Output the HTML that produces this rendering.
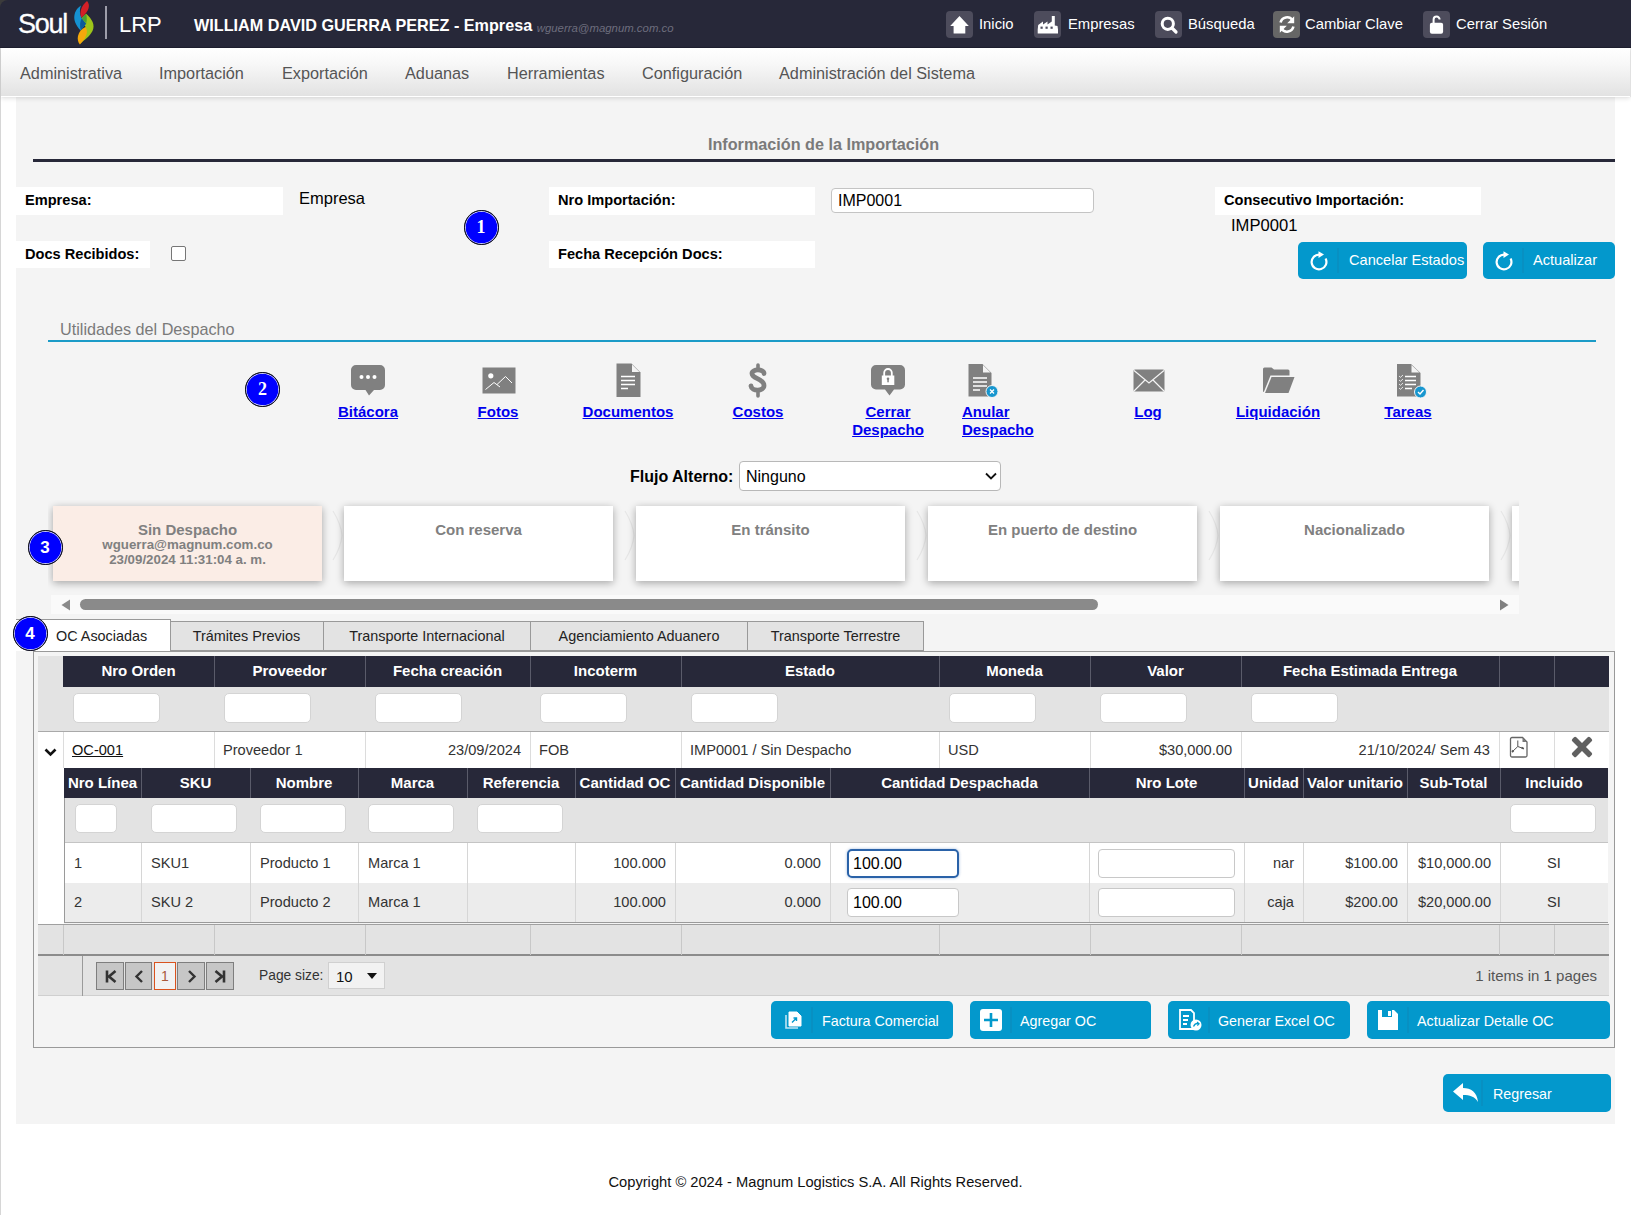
<!DOCTYPE html>
<html><head><meta charset="utf-8">
<style>
*{box-sizing:border-box;margin:0;padding:0}
html,body{width:1631px;height:1215px;overflow:hidden;background:#fff;font-family:"Liberation Sans",sans-serif;color:#000}
.abs{position:absolute}
#hdr{position:absolute;left:0;top:0;width:1631px;height:48px;background:#272839;border-top-left-radius:8px;border-bottom:1px solid #1f2030}
#hdr .ut{position:absolute;top:0;height:48px;line-height:48px;color:#fff;font-size:14.8px;white-space:nowrap}
.hib{position:absolute;top:11px;width:27px;height:27px;border-radius:4px;background:#4d4c5c}
#nav{position:absolute;left:1px;top:48px;width:1629px;height:49px;background:linear-gradient(#fff 0%,#f7f7f7 35%,#e2e2e2 100%);border-bottom:1px solid #fff;box-shadow:0 2px 4px rgba(0,0,0,0.10),1px 0 1px rgba(0,0,0,0.08);z-index:2}
#nav span{position:absolute;top:0.5px;line-height:48px;font-size:16.25px;color:#555}
#lb{position:absolute;left:0;top:48px;width:1px;height:1167px;background:#d6d6d6}
#content{position:absolute;left:16px;top:97px;width:1599px;height:1027px;background:#f4f4f4}
.lbl{position:absolute;background:#fff;font-weight:bold;font-size:14.6px;line-height:26px;padding-left:9px}
.badge{position:absolute;width:35px;height:35px;border-radius:50%;background:#0000ff;border:1.4px solid #111;box-shadow:inset 0 0 0 0.7px #fff,0 0 0.6px #777;color:#fff;font-family:"Liberation Serif",serif;font-weight:bold;font-size:18px;text-align:center;line-height:32px;z-index:5}
.btn{position:absolute;background:#0398cc;border-radius:5px;color:#fff;font-size:15px;white-space:nowrap}
.lnk{position:absolute;top:403px;font-weight:bold;font-size:15px;line-height:18px;color:#0000ee;text-decoration:underline;white-space:nowrap}
.card{position:absolute;top:6px;width:269px;height:75px;background:#fff;box-shadow:0 2px 8px rgba(0,0,0,0.33);text-align:center;color:#808080}
.tab{position:absolute;top:621px;height:30px;background:#e3e3e3;border:1px solid #999;border-left:none;font-size:14.4px;line-height:29px;text-align:center;color:#222}
.gt{position:absolute;font-size:15px;white-space:nowrap;overflow:hidden}
</style></head><body>
<div class="abs" style="left:0;top:0;width:10px;height:10px;background:#3b3b3b"></div>
<div id="hdr">
  <div class="ut" style="left:18px;top:-0.5px;font-size:27px;letter-spacing:-1.3px;-webkit-text-stroke:0.3px #fff">Soul</div>
  <div class="ut" style="left:119px;top:1px;font-size:22px">LRP</div>
  <div class="ut" style="left:194px;top:1px;font-weight:bold;font-size:16.2px">WILLIAM DAVID GUERRA PEREZ - Empresa <span style="font-weight:normal;font-style:italic;font-size:11.4px;color:#6d6d7d;position:relative;top:1px">wguerra@magnum.com.co</span></div>
  <div class="hib" style="left:946px"></div><div class="ut" style="left:979px">Inicio</div>
  <div class="hib" style="left:1034px"></div><div class="ut" style="left:1068px">Empresas</div>
  <div class="hib" style="left:1155px"></div><div class="ut" style="left:1188px">Búsqueda</div>
  <div class="hib" style="left:1273px;background:#666"></div><div class="ut" style="left:1305px">Cambiar Clave</div>
  <div class="hib" style="left:1423px"></div><div class="ut" style="left:1456px">Cerrar Sesión</div>
</div>
<div id="nav">
  <span style="left:19px">Administrativa</span>
  <span style="left:158px">Importación</span>
  <span style="left:281px">Exportación</span>
  <span style="left:404px">Aduanas</span>
  <span style="left:506px">Herramientas</span>
  <span style="left:641px">Configuración</span>
  <span style="left:778px">Administración del Sistema</span>
</div>
<div id="lb"></div>
<div id="content"></div>
<!-- title -->
<div class="abs" style="left:16px;top:135px;width:1615px;text-align:center;font-weight:bold;font-size:16.2px;color:#7a7a7a">Información de la Importación</div>
<div class="abs" style="left:33px;top:159px;width:1582px;height:3px;background:#272839"></div>
<!-- row 1 -->
<div class="lbl" style="left:16px;top:187px;width:267px;height:28px">Empresa:</div>
<div class="abs" style="left:299px;top:188px;font-size:16.5px;line-height:20px">Empresa</div>
<div class="badge" style="left:463.5px;top:209.5px">1</div>
<div class="lbl" style="left:549px;top:187px;width:266px;height:28px">Nro Importación:</div>
<div class="abs" style="left:831px;top:188px;width:263px;height:25px;background:#fff;border:1px solid #c4c4c4;border-radius:4px;font-size:16px;line-height:23px;padding-left:6px">IMP0001</div>
<div class="lbl" style="left:1215px;top:187px;width:266px;height:28px">Consecutivo Importación:</div>
<div class="abs" style="left:1231px;top:216px;font-size:16.6px;line-height:20px">IMP0001</div>
<!-- row 2 -->
<div class="lbl" style="left:16px;top:241px;width:134px;height:27px">Docs Recibidos:</div>
<div class="abs" style="left:171px;top:246px;width:15px;height:15px;border:1px solid #767676;border-radius:2px;background:#fff"></div>
<div class="lbl" style="left:549px;top:241px;width:266px;height:27px">Fecha Recepción Docs:</div>
<!-- buttons -->

<!-- utilidades -->
<div class="abs" style="left:60px;top:319px;font-size:16.2px;line-height:20px;color:#7a7a7a">Utilidades del Despacho</div>
<div class="abs" style="left:48px;top:340px;width:1548px;height:2px;background:#1b9bc7"></div>
<div class="badge" style="left:245px;top:372px">2</div>
<div id="icons"></div>
<div class="lnk" style="left:303px;width:130px;text-align:center">Bitácora</div>
<div class="lnk" style="left:433px;width:130px;text-align:center">Fotos</div>
<div class="lnk" style="left:563px;width:130px;text-align:center">Documentos</div>
<div class="lnk" style="left:693px;width:130px;text-align:center">Costos</div>
<div class="lnk" style="left:823px;width:130px;text-align:center">Cerrar<br>Despacho</div>
<div class="lnk" style="left:962px;width:130px;text-align:left">Anular<br>Despacho</div>
<div class="lnk" style="left:1083px;width:130px;text-align:center">Log</div>
<div class="lnk" style="left:1213px;width:130px;text-align:center">Liquidación</div>
<div class="lnk" style="left:1343px;width:130px;text-align:center">Tareas</div>
<!-- flujo -->
<div class="abs" style="left:630px;top:467px;font-weight:bold;font-size:16px;line-height:20px">Flujo Alterno:</div>
<div class="abs" style="left:739px;top:461px;width:262px;height:30px;background:#fff;border:1px solid #b8b8b8;border-radius:4px;font-size:16px;line-height:30px;padding-left:6px">Ninguno
  <svg class="abs" style="left:245px;top:10px" width="12" height="8" viewBox="0 0 12 8"><path d="M1 1.5 L6 6.5 L11 1.5" fill="none" stroke="#111" stroke-width="1.8"/></svg>
</div>
<!-- status cards -->
<div class="abs" style="left:48px;top:500px;width:1471px;height:114px;overflow:hidden">
  <svg class="abs" style="left:284px;top:10px" width="12" height="52" viewBox="0 0 12 52"><path d="M1 1 Q9 14 10 25.5 Q9 37 1 50" fill="none" stroke="#e6e6e6" stroke-width="1.2"/></svg><svg class="abs" style="left:576px;top:10px" width="12" height="52" viewBox="0 0 12 52"><path d="M1 1 Q9 14 10 25.5 Q9 37 1 50" fill="none" stroke="#e6e6e6" stroke-width="1.2"/></svg><svg class="abs" style="left:868px;top:10px" width="12" height="52" viewBox="0 0 12 52"><path d="M1 1 Q9 14 10 25.5 Q9 37 1 50" fill="none" stroke="#e6e6e6" stroke-width="1.2"/></svg><svg class="abs" style="left:1160px;top:10px" width="12" height="52" viewBox="0 0 12 52"><path d="M1 1 Q9 14 10 25.5 Q9 37 1 50" fill="none" stroke="#e6e6e6" stroke-width="1.2"/></svg><svg class="abs" style="left:1452px;top:10px" width="12" height="52" viewBox="0 0 12 52"><path d="M1 1 Q9 14 10 25.5 Q9 37 1 50" fill="none" stroke="#e6e6e6" stroke-width="1.2"/></svg><div class="card" style="left:5px;background:#fbede6"><b style="font-size:15px;line-height:18px;display:block;margin-top:15px">Sin Despacho</b><b style="font-size:13.3px;line-height:14.5px;display:block;margin-top:-1px">wguerra@magnum.com.co</b><b style="font-size:13.3px;line-height:14.5px;display:block">23/09/2024 11:31:04 a. m.</b></div>
  <div class="card" style="left:296px"><b style="font-size:15px;line-height:18px;display:block;margin-top:15px">Con reserva</b></div>
  <div class="card" style="left:588px"><b style="font-size:15px;line-height:18px;display:block;margin-top:15px">En tránsito</b></div>
  <div class="card" style="left:880px"><b style="font-size:15px;line-height:18px;display:block;margin-top:15px">En puerto de destino</b></div>
  <div class="card" style="left:1172px"><b style="font-size:15px;line-height:18px;display:block;margin-top:15px">Nacionalizado</b></div>
  <div class="card" style="left:1464px"></div>
  <div class="abs" style="left:3px;top:95px;width:1468px;height:19px;background:#fafafa"></div>
  <svg class="abs" style="left:12px;top:99px" width="11" height="12" viewBox="0 0 11 12"><path d="M10 0.5 L1.5 6 L10 11.5 Z" fill="#8a8a8a"/></svg>
  <div class="abs" style="left:32px;top:99px;width:1018px;height:11px;border-radius:6px;background:#8a8a8a"></div>
  <svg class="abs" style="left:1451px;top:99px" width="11" height="12" viewBox="0 0 11 12"><path d="M1 0.5 L9.5 6 L1 11.5 Z" fill="#808080"/></svg>
</div>
<div class="badge" style="left:27.5px;top:529.5px;font-family:'Liberation Sans',sans-serif;font-size:17px;line-height:33px">3</div>
<!-- tabs -->
<div class="tab" style="left:170px;width:154px">Trámites Previos</div>
<div class="tab" style="left:324px;width:207px">Transporte Internacional</div>
<div class="tab" style="left:531px;width:217px">Agenciamiento Aduanero</div>
<div class="tab" style="left:748px;width:176px">Transporte Terrestre</div>
<div class="abs" style="left:33px;top:651px;width:1582px;height:397px;border:1px solid #999"></div>
<div class="abs" style="left:16px;top:619px;width:155px;height:32px;background:#fff;border-top:1px solid #999;border-right:1px solid #999;font-size:14.4px;line-height:33px;padding-left:40px;color:#222">OC Asociadas</div>
<div class="badge" style="left:12.5px;top:615.5px;font-family:'Liberation Sans',sans-serif;font-size:17px;line-height:33px">4</div>

<!--GRID-->
<div class="abs" style="left:38px;top:656px;width:1571px;height:31px;background:#272839"></div>
<div class="abs" style="left:38px;top:656px;width:25px;height:31px;background:#e3e3e3"></div>
<div class="abs" style="left:214px;top:656px;width:1px;height:31px;background:#5a5b6a"></div>
<div class="abs" style="left:365px;top:656px;width:1px;height:31px;background:#5a5b6a"></div>
<div class="abs" style="left:530px;top:656px;width:1px;height:31px;background:#5a5b6a"></div>
<div class="abs" style="left:681px;top:656px;width:1px;height:31px;background:#5a5b6a"></div>
<div class="abs" style="left:939px;top:656px;width:1px;height:31px;background:#5a5b6a"></div>
<div class="abs" style="left:1090px;top:656px;width:1px;height:31px;background:#5a5b6a"></div>
<div class="abs" style="left:1241px;top:656px;width:1px;height:31px;background:#5a5b6a"></div>
<div class="abs" style="left:1499px;top:656px;width:1px;height:31px;background:#5a5b6a"></div>
<div class="abs" style="left:1554px;top:656px;width:1px;height:31px;background:#5a5b6a"></div>
<div class="gt" style="left:63px;top:655px;width:151px;height:31px;line-height:31px;color:#fff;font-weight:bold;text-align:center">Nro Orden</div>
<div class="gt" style="left:214px;top:655px;width:151px;height:31px;line-height:31px;color:#fff;font-weight:bold;text-align:center">Proveedor</div>
<div class="gt" style="left:365px;top:655px;width:165px;height:31px;line-height:31px;color:#fff;font-weight:bold;text-align:center">Fecha creación</div>
<div class="gt" style="left:530px;top:655px;width:151px;height:31px;line-height:31px;color:#fff;font-weight:bold;text-align:center">Incoterm</div>
<div class="gt" style="left:681px;top:655px;width:258px;height:31px;line-height:31px;color:#fff;font-weight:bold;text-align:center">Estado</div>
<div class="gt" style="left:939px;top:655px;width:151px;height:31px;line-height:31px;color:#fff;font-weight:bold;text-align:center">Moneda</div>
<div class="gt" style="left:1090px;top:655px;width:151px;height:31px;line-height:31px;color:#fff;font-weight:bold;text-align:center">Valor</div>
<div class="gt" style="left:1241px;top:655px;width:258px;height:31px;line-height:31px;color:#fff;font-weight:bold;text-align:center">Fecha Estimada Entrega</div>
<div class="gt" style="left:1499px;top:655px;width:55px;height:31px;line-height:31px;color:#fff;font-weight:bold;text-align:center"></div>
<div class="gt" style="left:1554px;top:655px;width:55px;height:31px;line-height:31px;color:#fff;font-weight:bold;text-align:center"></div>
<div class="abs" style="left:38px;top:687px;width:1571px;height:44px;background:#e3e3e3"></div>
<div class="abs" style="left:73px;top:693px;width:87px;height:30px;background:#fff;border:1px solid #d4d4d4;border-radius:5px"></div>
<div class="abs" style="left:224px;top:693px;width:87px;height:30px;background:#fff;border:1px solid #d4d4d4;border-radius:5px"></div>
<div class="abs" style="left:375px;top:693px;width:87px;height:30px;background:#fff;border:1px solid #d4d4d4;border-radius:5px"></div>
<div class="abs" style="left:540px;top:693px;width:87px;height:30px;background:#fff;border:1px solid #d4d4d4;border-radius:5px"></div>
<div class="abs" style="left:691px;top:693px;width:87px;height:30px;background:#fff;border:1px solid #d4d4d4;border-radius:5px"></div>
<div class="abs" style="left:949px;top:693px;width:87px;height:30px;background:#fff;border:1px solid #d4d4d4;border-radius:5px"></div>
<div class="abs" style="left:1100px;top:693px;width:87px;height:30px;background:#fff;border:1px solid #d4d4d4;border-radius:5px"></div>
<div class="abs" style="left:1251px;top:693px;width:87px;height:30px;background:#fff;border:1px solid #d4d4d4;border-radius:5px"></div>
<div class="abs" style="left:38px;top:731px;width:1571px;height:37px;background:#fff"></div>
<div class="abs" style="left:63px;top:731px;width:1px;height:37px;background:#dcdcdc"></div>
<div class="abs" style="left:214px;top:731px;width:1px;height:37px;background:#dcdcdc"></div>
<div class="abs" style="left:365px;top:731px;width:1px;height:37px;background:#dcdcdc"></div>
<div class="abs" style="left:530px;top:731px;width:1px;height:37px;background:#dcdcdc"></div>
<div class="abs" style="left:681px;top:731px;width:1px;height:37px;background:#dcdcdc"></div>
<div class="abs" style="left:939px;top:731px;width:1px;height:37px;background:#dcdcdc"></div>
<div class="abs" style="left:1090px;top:731px;width:1px;height:37px;background:#dcdcdc"></div>
<div class="abs" style="left:1241px;top:731px;width:1px;height:37px;background:#dcdcdc"></div>
<div class="abs" style="left:1499px;top:731px;width:1px;height:37px;background:#dcdcdc"></div>
<div class="abs" style="left:1554px;top:731px;width:1px;height:37px;background:#dcdcdc"></div>
<div class="abs" style="left:38px;top:731px;width:1571px;height:1px;background:#a9a9a9"></div>
<div class="gt" style="left:63px;top:732px;width:151px;height:36px;line-height:36px;text-align:left;padding-left:9px;color:#333;font-size:14.6px;text-decoration:underline;color:#111">OC-001</div>
<div class="gt" style="left:214px;top:732px;width:151px;height:36px;line-height:36px;text-align:left;padding-left:9px;color:#333;font-size:14.6px;">Proveedor 1</div>
<div class="gt" style="left:365px;top:732px;width:165px;height:36px;line-height:36px;text-align:right;padding-right:9px;color:#333;font-size:14.6px;">23/09/2024</div>
<div class="gt" style="left:530px;top:732px;width:151px;height:36px;line-height:36px;text-align:left;padding-left:9px;color:#333;font-size:14.6px;">FOB</div>
<div class="gt" style="left:681px;top:732px;width:258px;height:36px;line-height:36px;text-align:left;padding-left:9px;color:#333;font-size:14.6px;">IMP0001 / Sin Despacho</div>
<div class="gt" style="left:939px;top:732px;width:151px;height:36px;line-height:36px;text-align:left;padding-left:9px;color:#333;font-size:14.6px;">USD</div>
<div class="gt" style="left:1090px;top:732px;width:151px;height:36px;line-height:36px;text-align:right;padding-right:9px;color:#333;font-size:14.6px;">$30,000.00</div>
<div class="gt" style="left:1241px;top:732px;width:258px;height:36px;line-height:36px;text-align:right;padding-right:9px;color:#333;font-size:14.6px;">21/10/2024/ Sem 43</div>
<svg class="abs" style="left:44px;top:748px" width="13" height="9" viewBox="0 0 13 9"><path d="M1.5 1.5 L6.5 6.5 L11.5 1.5" fill="none" stroke="#111" stroke-width="2.6"/></svg>
<svg class="abs" style="left:1509px;top:736px" width="20" height="22" viewBox="0 0 20 22"><path d="M3 1.5 H13.5 L18 6 V19.5 A1.5 1.5 0 0 1 16.5 21 H3 A1.5 1.5 0 0 1 1.5 19.5 V3 A1.5 1.5 0 0 1 3 1.5 Z" fill="none" stroke="#666" stroke-width="1.3"/><path d="M13.5 2 V6 H17.5 Z" fill="#777"/><path d="M8.8 4.5 V10.5 L3 16 M8.8 10.5 L14.8 12.7" fill="none" stroke="#555" stroke-width="1"/><path d="M3 16 L4.5 14.5 M14.8 12.7 L12.5 11.5" stroke="#555" stroke-width="1.8"/></svg>
<svg class="abs" style="left:1571px;top:736px" width="22" height="22" viewBox="0 0 22 22"><g transform="rotate(45 11 11)"><rect x="8.2" y="-1.5" width="5.6" height="25" rx="1.6" fill="#606060"/><rect x="-1.5" y="8.2" width="25" height="5.6" rx="1.6" fill="#606060"/></g></svg>
<div class="abs" style="left:38px;top:768px;width:26px;height:156px;background:#fff"></div>
<div class="abs" style="left:64px;top:768px;width:1544px;height:30px;background:#272839"></div>
<div class="abs" style="left:141px;top:768px;width:1px;height:30px;background:#5a5b6a"></div>
<div class="abs" style="left:250px;top:768px;width:1px;height:30px;background:#5a5b6a"></div>
<div class="abs" style="left:358px;top:768px;width:1px;height:30px;background:#5a5b6a"></div>
<div class="abs" style="left:467px;top:768px;width:1px;height:30px;background:#5a5b6a"></div>
<div class="abs" style="left:575px;top:768px;width:1px;height:30px;background:#5a5b6a"></div>
<div class="abs" style="left:675px;top:768px;width:1px;height:30px;background:#5a5b6a"></div>
<div class="abs" style="left:830px;top:768px;width:1px;height:30px;background:#5a5b6a"></div>
<div class="abs" style="left:1089px;top:768px;width:1px;height:30px;background:#5a5b6a"></div>
<div class="abs" style="left:1244px;top:768px;width:1px;height:30px;background:#5a5b6a"></div>
<div class="abs" style="left:1303px;top:768px;width:1px;height:30px;background:#5a5b6a"></div>
<div class="abs" style="left:1407px;top:768px;width:1px;height:30px;background:#5a5b6a"></div>
<div class="abs" style="left:1500px;top:768px;width:1px;height:30px;background:#5a5b6a"></div>
<div class="gt" style="left:64px;top:768px;width:77px;height:30px;line-height:30px;color:#fff;font-weight:bold;text-align:center">Nro Línea</div>
<div class="gt" style="left:141px;top:768px;width:109px;height:30px;line-height:30px;color:#fff;font-weight:bold;text-align:center">SKU</div>
<div class="gt" style="left:250px;top:768px;width:108px;height:30px;line-height:30px;color:#fff;font-weight:bold;text-align:center">Nombre</div>
<div class="gt" style="left:358px;top:768px;width:109px;height:30px;line-height:30px;color:#fff;font-weight:bold;text-align:center">Marca</div>
<div class="gt" style="left:467px;top:768px;width:108px;height:30px;line-height:30px;color:#fff;font-weight:bold;text-align:center">Referencia</div>
<div class="gt" style="left:575px;top:768px;width:100px;height:30px;line-height:30px;color:#fff;font-weight:bold;text-align:center">Cantidad OC</div>
<div class="gt" style="left:675px;top:768px;width:155px;height:30px;line-height:30px;color:#fff;font-weight:bold;text-align:center">Cantidad Disponible</div>
<div class="gt" style="left:830px;top:768px;width:259px;height:30px;line-height:30px;color:#fff;font-weight:bold;text-align:center">Cantidad Despachada</div>
<div class="gt" style="left:1089px;top:768px;width:155px;height:30px;line-height:30px;color:#fff;font-weight:bold;text-align:center">Nro Lote</div>
<div class="gt" style="left:1244px;top:768px;width:59px;height:30px;line-height:30px;color:#fff;font-weight:bold;text-align:center">Unidad</div>
<div class="gt" style="left:1303px;top:768px;width:104px;height:30px;line-height:30px;color:#fff;font-weight:bold;text-align:center">Valor unitario</div>
<div class="gt" style="left:1407px;top:768px;width:93px;height:30px;line-height:30px;color:#fff;font-weight:bold;text-align:center">Sub-Total</div>
<div class="gt" style="left:1500px;top:768px;width:108px;height:30px;line-height:30px;color:#fff;font-weight:bold;text-align:center">Incluido</div>
<div class="abs" style="left:64px;top:798px;width:1544px;height:45px;background:#e3e3e3"></div>
<div class="abs" style="left:64px;top:842px;width:1544px;height:1px;background:#c4c4c4"></div>
<div class="abs" style="left:75px;top:804px;width:42px;height:29px;background:#fff;border:1px solid #d4d4d4;border-radius:5px"></div>
<div class="abs" style="left:151px;top:804px;width:86px;height:29px;background:#fff;border:1px solid #d4d4d4;border-radius:5px"></div>
<div class="abs" style="left:260px;top:804px;width:86px;height:29px;background:#fff;border:1px solid #d4d4d4;border-radius:5px"></div>
<div class="abs" style="left:368px;top:804px;width:86px;height:29px;background:#fff;border:1px solid #d4d4d4;border-radius:5px"></div>
<div class="abs" style="left:477px;top:804px;width:86px;height:29px;background:#fff;border:1px solid #d4d4d4;border-radius:5px"></div>
<div class="abs" style="left:1510px;top:804px;width:86px;height:29px;background:#fff;border:1px solid #d4d4d4;border-radius:5px"></div>
<div class="abs" style="left:64px;top:843px;width:1544px;height:40px;background:#fff"></div>
<div class="abs" style="left:64px;top:883px;width:1544px;height:39px;background:#ececec"></div>
<div class="abs" style="left:64px;top:798px;width:1px;height:125px;background:#9a9a9a"></div>
<div class="abs" style="left:64px;top:922px;width:1544px;height:1px;background:#9a9a9a"></div>
<div class="abs" style="left:141px;top:843px;width:1px;height:79px;background:#d6d6d6"></div>
<div class="abs" style="left:250px;top:843px;width:1px;height:79px;background:#d6d6d6"></div>
<div class="abs" style="left:358px;top:843px;width:1px;height:79px;background:#d6d6d6"></div>
<div class="abs" style="left:467px;top:843px;width:1px;height:79px;background:#d6d6d6"></div>
<div class="abs" style="left:575px;top:843px;width:1px;height:79px;background:#d6d6d6"></div>
<div class="abs" style="left:675px;top:843px;width:1px;height:79px;background:#d6d6d6"></div>
<div class="abs" style="left:830px;top:843px;width:1px;height:79px;background:#d6d6d6"></div>
<div class="abs" style="left:1089px;top:843px;width:1px;height:79px;background:#d6d6d6"></div>
<div class="abs" style="left:1244px;top:843px;width:1px;height:79px;background:#d6d6d6"></div>
<div class="abs" style="left:1303px;top:843px;width:1px;height:79px;background:#d6d6d6"></div>
<div class="abs" style="left:1407px;top:843px;width:1px;height:79px;background:#d6d6d6"></div>
<div class="abs" style="left:1500px;top:843px;width:1px;height:79px;background:#d6d6d6"></div>
<div class="gt" style="left:64px;top:843px;width:77px;height:40px;line-height:40px;text-align:left;padding-left:10px;color:#333;font-size:14.6px">1</div>
<div class="gt" style="left:141px;top:843px;width:109px;height:40px;line-height:40px;text-align:left;padding-left:10px;color:#333;font-size:14.6px">SKU1</div>
<div class="gt" style="left:250px;top:843px;width:108px;height:40px;line-height:40px;text-align:left;padding-left:10px;color:#333;font-size:14.6px">Producto 1</div>
<div class="gt" style="left:358px;top:843px;width:109px;height:40px;line-height:40px;text-align:left;padding-left:10px;color:#333;font-size:14.6px">Marca 1</div>
<div class="gt" style="left:575px;top:843px;width:100px;height:40px;line-height:40px;text-align:right;padding-right:9px;color:#333;font-size:14.6px">100.000</div>
<div class="gt" style="left:675px;top:843px;width:155px;height:40px;line-height:40px;text-align:right;padding-right:9px;color:#333;font-size:14.6px">0.000</div>
<div class="gt" style="left:1244px;top:843px;width:59px;height:40px;line-height:40px;text-align:right;padding-right:9px;color:#333;font-size:14.6px">nar</div>
<div class="gt" style="left:1303px;top:843px;width:104px;height:40px;line-height:40px;text-align:right;padding-right:9px;color:#333;font-size:14.6px">$100.00</div>
<div class="gt" style="left:1407px;top:843px;width:93px;height:40px;line-height:40px;text-align:right;padding-right:9px;color:#333;font-size:14.6px">$10,000.00</div>
<div class="gt" style="left:1500px;top:843px;width:108px;height:40px;line-height:40px;text-align:center;;color:#333;font-size:14.6px">SI</div>
<div class="gt" style="left:64px;top:883px;width:77px;height:39px;line-height:39px;text-align:left;padding-left:10px;color:#333;font-size:14.6px">2</div>
<div class="gt" style="left:141px;top:883px;width:109px;height:39px;line-height:39px;text-align:left;padding-left:10px;color:#333;font-size:14.6px">SKU 2</div>
<div class="gt" style="left:250px;top:883px;width:108px;height:39px;line-height:39px;text-align:left;padding-left:10px;color:#333;font-size:14.6px">Producto 2</div>
<div class="gt" style="left:358px;top:883px;width:109px;height:39px;line-height:39px;text-align:left;padding-left:10px;color:#333;font-size:14.6px">Marca 1</div>
<div class="gt" style="left:575px;top:883px;width:100px;height:39px;line-height:39px;text-align:right;padding-right:9px;color:#333;font-size:14.6px">100.000</div>
<div class="gt" style="left:675px;top:883px;width:155px;height:39px;line-height:39px;text-align:right;padding-right:9px;color:#333;font-size:14.6px">0.000</div>
<div class="gt" style="left:1244px;top:883px;width:59px;height:39px;line-height:39px;text-align:right;padding-right:9px;color:#333;font-size:14.6px">caja</div>
<div class="gt" style="left:1303px;top:883px;width:104px;height:39px;line-height:39px;text-align:right;padding-right:9px;color:#333;font-size:14.6px">$200.00</div>
<div class="gt" style="left:1407px;top:883px;width:93px;height:39px;line-height:39px;text-align:right;padding-right:9px;color:#333;font-size:14.6px">$20,000.00</div>
<div class="gt" style="left:1500px;top:883px;width:108px;height:39px;line-height:39px;text-align:center;;color:#333;font-size:14.6px">SI</div>
<div class="abs" style="left:847px;top:849px;width:112px;height:29px;background:#fff;border:2px solid #2a62a8;border-radius:5px;box-shadow:0 0 3px rgba(40,100,180,0.45);font-size:16px;line-height:25px;padding-left:4px;color:#000">100.00</div>
<div class="abs" style="left:847px;top:888px;width:112px;height:29px;background:#fff;border:1px solid #c8c8c8;border-radius:4px;font-size:16px;line-height:27px;padding-left:5px;color:#000">100.00</div>
<div class="abs" style="left:1098px;top:849px;width:137px;height:29px;background:#fff;border:1px solid #c8c8c8;border-radius:4px"></div>
<div class="abs" style="left:1098px;top:888px;width:137px;height:29px;background:#fff;border:1px solid #c8c8c8;border-radius:4px"></div>
<div class="abs" style="left:38px;top:924px;width:1571px;height:32px;background:#e3e3e3;border-top:1px solid #a0a0a0;border-bottom:2px solid #8c8c8c"></div>
<div class="abs" style="left:63px;top:925px;width:1px;height:30px;background:#c8c8c8"></div>
<div class="abs" style="left:214px;top:925px;width:1px;height:30px;background:#c8c8c8"></div>
<div class="abs" style="left:365px;top:925px;width:1px;height:30px;background:#c8c8c8"></div>
<div class="abs" style="left:530px;top:925px;width:1px;height:30px;background:#c8c8c8"></div>
<div class="abs" style="left:681px;top:925px;width:1px;height:30px;background:#c8c8c8"></div>
<div class="abs" style="left:939px;top:925px;width:1px;height:30px;background:#c8c8c8"></div>
<div class="abs" style="left:1090px;top:925px;width:1px;height:30px;background:#c8c8c8"></div>
<div class="abs" style="left:1241px;top:925px;width:1px;height:30px;background:#c8c8c8"></div>
<div class="abs" style="left:1499px;top:925px;width:1px;height:30px;background:#c8c8c8"></div>
<div class="abs" style="left:1554px;top:925px;width:1px;height:30px;background:#c8c8c8"></div>
<div class="abs" style="left:38px;top:956px;width:1571px;height:40px;background:#e3e3e3;border-bottom:1px solid #cfcfcf"></div>
<div class="abs" style="left:82px;top:956px;width:1px;height:40px;background:#9a9a9a"></div>
<div class="abs" style="left:96px;top:962px;width:28px;height:28px;background:#c6c6c6;border:1px solid #7e7e7e"><svg class="abs" style="left:8px;top:7px" width="12" height="13" viewBox="0 0 12 13"><path d="M2 0.5 V12.5 M10.5 1 L4 6.5 L10.5 12" fill="none" stroke="#333" stroke-width="2.6"/></svg></div>
<div class="abs" style="left:125px;top:962px;width:27px;height:28px;background:#c6c6c6;border:1px solid #7e7e7e"><svg class="abs" style="left:8px;top:7px" width="10" height="13" viewBox="0 0 10 13"><path d="M8 1 L2.5 6.5 L8 12" fill="none" stroke="#333" stroke-width="2.4"/></svg></div>
<div class="abs" style="left:154px;top:962px;width:22px;height:28px;background:#f2f2f2;border:1px solid #d9531e;text-align:center;font-size:14px;line-height:26px;color:#a9593a">1</div>
<div class="abs" style="left:177px;top:962px;width:28px;height:28px;background:#c6c6c6;border:1px solid #7e7e7e"><svg class="abs" style="left:9px;top:7px" width="10" height="13" viewBox="0 0 10 13"><path d="M2 1 L7.5 6.5 L2 12" fill="none" stroke="#333" stroke-width="2.4"/></svg></div>
<div class="abs" style="left:206px;top:962px;width:28px;height:28px;background:#c6c6c6;border:1px solid #7e7e7e"><svg class="abs" style="left:7px;top:7px" width="12" height="13" viewBox="0 0 12 13"><path d="M10 0.5 V12.5 M1.5 1 L8 6.5 L1.5 12" fill="none" stroke="#333" stroke-width="2.6"/></svg></div>
<div class="gt" style="left:259px;top:962px;height:28px;line-height:28px;color:#333;font-size:13.8px">Page size:</div>
<div class="abs" style="left:328px;top:962px;width:57px;height:27px;background:#f2f2f2;border:1px solid #d0d0d0;font-size:15px;line-height:27px;padding-left:7px;color:#111">10<svg class="abs" style="left:38px;top:10px" width="10" height="6" viewBox="0 0 10 6"><path d="M0 0 H10 L5 6 Z" fill="#111"/></svg></div>
<div class="gt" style="left:1300px;top:962px;width:297px;height:28px;line-height:28px;text-align:right;color:#555">1 items in <b style="font-weight:normal;color:#444">1</b> pages</div>
<!--/GRID-->
<!--BTN-->
<div class="btn" style="left:1298px;top:242px;width:169px;height:37px"><div class="abs" style="left:39px;top:6px;width:2px;height:25px;background:#0890c2"></div><svg class="abs" style="left:10px;top:8px" width="22" height="22" viewBox="0 0 22 22"><path d="M11.5 4.6 A7.4 7.4 0 1 0 17.6 8.6" fill="none" stroke="#fff" stroke-width="2.2"/><path d="M10.5 1.2 L16 4.6 L10.5 8 Z" fill="#fff"/></svg><div class="abs" style="left:51px;top:-0.5px;line-height:37px;font-size:14.6px">Cancelar Estados</div></div>
<div class="btn" style="left:1483px;top:242px;width:132px;height:37px"><div class="abs" style="left:39px;top:6px;width:2px;height:25px;background:#0890c2"></div><svg class="abs" style="left:10px;top:8px" width="22" height="22" viewBox="0 0 22 22"><path d="M11.5 4.6 A7.4 7.4 0 1 0 17.6 8.6" fill="none" stroke="#fff" stroke-width="2.2"/><path d="M10.5 1.2 L16 4.6 L10.5 8 Z" fill="#fff"/></svg><div class="abs" style="left:50px;top:-0.5px;line-height:37px;font-size:14.6px">Actualizar</div></div>
<div class="btn" style="left:771px;top:1001px;width:182px;height:38px"><div class="abs" style="left:40px;top:6px;width:2px;height:26px;background:#0890c2"></div><svg class="abs" style="left:12px;top:8px" width="22" height="22" viewBox="0 0 22 22"><path d="M3 6 V19 H15" fill="none" stroke="#bfe4f3" stroke-width="1.6"/><path d="M6 3 H14 L18 7 V17 H6 Z" fill="#fff" stroke="#fff" stroke-width="1"/><path d="M9 13.5 L13.5 9 M10.5 9 H13.5 V12" fill="none" stroke="#0299cc" stroke-width="1.4"/></svg><div class="abs" style="left:51px;top:1px;line-height:38px;font-size:14.3px">Factura Comercial</div></div>
<div class="btn" style="left:970px;top:1001px;width:181px;height:38px"><div class="abs" style="left:40px;top:6px;width:2px;height:26px;background:#0890c2"></div><svg class="abs" style="left:9px;top:7px" width="24" height="24" viewBox="0 0 24 24"><rect x="1" y="1" width="22" height="22" rx="3" fill="#fff"/><path d="M12 5 V19 M5 12 H19" stroke="#0299cc" stroke-width="2.6"/></svg><div class="abs" style="left:50px;top:1px;line-height:38px;font-size:14.3px">Agregar OC</div></div>
<div class="btn" style="left:1168px;top:1001px;width:182px;height:38px"><div class="abs" style="left:40px;top:6px;width:2px;height:26px;background:#0890c2"></div><svg class="abs" style="left:10px;top:7px" width="26" height="24" viewBox="0 0 26 24"><path d="M2 2 H13 L16 5 V21 H2 Z" fill="none" stroke="#fff" stroke-width="1.8"/><path d="M5 8 H11 M5 12 H10 M5 16 H9" stroke="#fff" stroke-width="1.8"/><circle cx="18" cy="17" r="5.5" fill="#fff"/><path d="M15.5 18.5 Q17 15 20.5 15.5 M19 14 L21 15.7 L19.3 17.5" fill="none" stroke="#0299cc" stroke-width="1.3"/></svg><div class="abs" style="left:50px;top:1px;line-height:38px;font-size:14.3px">Generar Excel OC</div></div>
<div class="btn" style="left:1367px;top:1001px;width:243px;height:38px"><div class="abs" style="left:40px;top:6px;width:2px;height:26px;background:#0890c2"></div><svg class="abs" style="left:9px;top:7px" width="24" height="24" viewBox="0 0 24 24"><path d="M2 2 H18 L22 6 V22 H2 Z" fill="#fff"/><rect x="6" y="2" width="10" height="7" fill="#0299cc"/><rect x="12" y="3" width="3" height="5" fill="#fff"/><rect x="5" y="13" width="14" height="8" fill="#fff"/></svg><div class="abs" style="left:50px;top:1px;line-height:38px;font-size:14.3px">Actualizar Detalle OC</div></div>
<div class="btn" style="left:1443px;top:1074px;width:168px;height:38px"><div class="abs" style="left:38px;top:6px;width:2px;height:26px;background:#0890c2"></div><svg class="abs" style="left:9px;top:8px" width="28" height="22" viewBox="0 0 28 22"><path d="M1 9.5 L11 1 V6 C19 6 25 10 26 20 C22.5 14.5 18 13 11 13 V18 Z" fill="#fff"/></svg><div class="abs" style="left:50px;top:1px;line-height:38px;font-size:14.3px">Regresar</div></div>
<!--/BTN-->
<!--ICONS-->
<svg class="abs" style="left:68px;top:0" width="32" height="48" viewBox="0 0 32 48">
  <path d="M13 5.5 C6 10 2.5 20 12.6 30.4 L18.2 23.7 L13.4 17.8 C11.5 14 11.5 9 13 5.5 Z" fill="#1591d1"/>
  <path d="M18.2 13.8 C24 19 27.5 25 24.5 31 C21.5 37 16 40 11.9 43.8 L17.5 27 L13.6 18 Z" fill="#9dc51a"/>
  <path d="M19 1 C22.5 5 21.5 11 13.4 17.8 C11 13 13 6 19 1 Z" fill="#d42027"/>
  <path d="M17.4 26.9 C20.5 31 19 37 11.9 44.5 C8 40 9 31 17.4 26.9 Z" fill="#f5a80b"/>
  <path d="M13.8 18.3 L18.2 23.7 L12.8 30 C11.5 26 12 21 13.8 18.3 Z" fill="#0b5a9a"/>
  <path d="M13.8 18 L18.2 13.8 C19 17 19 20 18.2 23.5 Z" fill="#4aa032"/>
</svg>
<div class="abs" style="left:105px;top:6px;width:2px;height:33px;background:#9d9daa"></div>
<!-- header icons -->
<svg class="abs" style="left:946px;top:11px" width="27" height="27" viewBox="0 0 27 27"><path d="M13.5 5 L22.8 15 H19.3 V22.5 H7.6 V15 H4.2 Z" fill="#fff"/></svg>
<svg class="abs" style="left:1034px;top:11px" width="27" height="27" viewBox="0 0 27 27"><path d="M3.7 22.5 V18.5 L4.2 14 L9 10.5 V13.5 L13.5 10.5 V13.5 L17.8 10.5 V5 H20.8 V14.5 L23.5 15 L24 18.5 V22.5 Z" fill="#fff"/><rect x="6.5" y="15.6" width="2.2" height="2.2" fill="#4e4d5e"/><rect x="11.5" y="15.6" width="2.2" height="2.2" fill="#4e4d5e"/><rect x="16.5" y="15.6" width="2.2" height="2.2" fill="#4e4d5e"/></svg>
<svg class="abs" style="left:1155px;top:11px" width="27" height="27" viewBox="0 0 27 27"><circle cx="12.8" cy="12.8" r="5.6" fill="none" stroke="#fff" stroke-width="3"/><path d="M17 17 L21 21" stroke="#fff" stroke-width="3.2" stroke-linecap="round"/></svg>
<svg class="abs" style="left:1273px;top:11px" width="28" height="27" viewBox="0 0 28 27"><path d="M7.6 11.5 A6.6 6.6 0 0 1 19.5 9.2" fill="none" stroke="#fff" stroke-width="2.6"/><path d="M21.2 5.2 V12.2 H14.2 Z" fill="#fff"/><path d="M20.4 15.5 A6.6 6.6 0 0 1 8.5 17.8" fill="none" stroke="#fff" stroke-width="2.6"/><path d="M6.8 21.8 V14.8 H13.8 Z" fill="#fff"/></svg>
<svg class="abs" style="left:1423px;top:11px" width="27" height="27" viewBox="0 0 27 27"><rect x="6.9" y="11.7" width="13.2" height="11.1" rx="2" fill="#fff"/><path d="M10.6 12.5 V8.6 A3 3 0 0 1 16.6 8.6" fill="none" stroke="#fff" stroke-width="2"/></svg>
<!-- utility icons -->
<svg class="abs" style="left:350px;top:364px" width="36" height="33" viewBox="0 0 36 33"><path d="M6 1 H30 A5 5 0 0 1 35 6 V21 A5 5 0 0 1 30 26 H24 L19 31.5 L15.5 26 H6 A5 5 0 0 1 1 21 V6 A5 5 0 0 1 6 1 Z" fill="#808080"/><circle cx="11.5" cy="13" r="2" fill="#fff"/><circle cx="18" cy="13" r="2" fill="#fff"/><circle cx="24.5" cy="13" r="2" fill="#fff"/></svg>
<svg class="abs" style="left:482px;top:367px" width="34" height="27" viewBox="0 0 34 27"><rect x="0.5" y="0.5" width="33" height="26" fill="#808080"/><circle cx="8.8" cy="8.8" r="2.6" fill="#fff"/><path d="M3.5 22.5 L12 15.5 L18 20 M15 17.5 L23.5 9.5 L30 16" fill="none" stroke="#fff" stroke-width="1"/></svg>
<svg class="abs" style="left:616px;top:363px" width="26" height="35" viewBox="0 0 26 35"><path d="M0.5 0.5 H15.5 L24.5 9.5 V34 H0.5 Z" fill="#808080"/><path d="M16 1.5 V9 H23.5 Z" fill="#f4f4f4"/><path d="M5 13.5 H19 M5 17.5 H19 M5 21.5 H19 M5 25.5 H12" stroke="#fff" stroke-width="1.4"/></svg>
<svg class="abs" style="left:747px;top:363px" width="22" height="35" viewBox="0 0 22 35"><path d="M17 10.5 C17 6 5 5.5 5 10.5 C5 16 17 15.5 17 22.5 C17 28.5 4.5 28.5 4 23" fill="none" stroke="#808080" stroke-width="4.8" stroke-linecap="round"/><path d="M11 2 V7 M11 28 V33" stroke="#808080" stroke-width="3.6" stroke-linecap="round"/></svg>
<svg class="abs" style="left:870px;top:364px" width="36" height="33" viewBox="0 0 36 33"><path d="M6 1 H30 A5 5 0 0 1 35 6 V20.5 A5 5 0 0 1 30 25.5 H24 L19.5 31.5 L15 25.5 H6 A5 5 0 0 1 1 20.5 V6 A5 5 0 0 1 6 1 Z" fill="#808080"/><rect x="11.8" y="11.5" width="12.5" height="9.5" fill="#fff"/><path d="M14.2 12 V8.8 A3.8 3.8 0 0 1 21.8 8.8 V12" fill="none" stroke="#fff" stroke-width="1.8"/><rect x="17.3" y="14.3" width="1.5" height="4" fill="#808080"/><circle cx="18" cy="14.8" r="1.3" fill="#808080"/></svg>
<svg class="abs" style="left:967px;top:363px" width="34" height="35" viewBox="0 0 34 35"><path d="M1.5 1 H15.5 L24.5 10 V33.5 H1.5 Z" fill="#808080"/><path d="M16 2 V9.5 H23.5 Z" fill="#f4f4f4"/><path d="M6 15 H20 M6 19 H20 M6 23 H20 M6 27 H13" stroke="#fff" stroke-width="1.3"/><circle cx="25" cy="28.5" r="6" fill="#1796cf" stroke="#f4f4f4" stroke-width="1"/><path d="M23 26.5 L27 30.5 M27 26.5 L23 30.5" stroke="#fff" stroke-width="1.3"/></svg>
<svg class="abs" style="left:1133px;top:369px" width="32" height="23" viewBox="0 0 32 23"><rect x="0.5" y="0.5" width="31" height="22" rx="1.5" fill="#808080"/><path d="M1 1.5 L16 14 L31 1.5 M1 22 L12 11 M31 22 L20 11" fill="none" stroke="#f4f4f4" stroke-width="1.2"/></svg>
<svg class="abs" style="left:1262px;top:367px" width="34" height="27" viewBox="0 0 34 27"><path d="M1 2 A1.5 1.5 0 0 1 2.5 0.5 H9.5 L12 2.5 H26 A1.5 1.5 0 0 1 27.5 4 V8.5 H8.5 L1.8 25 A1 1 0 0 1 1 24 Z" fill="#808080"/><path d="M9.5 10 H32.5 L26.5 26 H3 Z" fill="#808080"/></svg>
<svg class="abs" style="left:1396px;top:363px" width="34" height="35" viewBox="0 0 34 35"><path d="M1 1 H15 L24.5 10 V33.5 H1 Z" fill="#808080"/><path d="M15.5 2 V9.5 H23.5 Z" fill="#f4f4f4"/><path d="M9 13.5 H20 M9 17.5 H20 M9 21.5 H20 M9 25.5 H16" stroke="#fff" stroke-width="1.3"/><path d="M3 13 L4.5 14.3 L7 12 M3 17 L4.5 18.3 L7 16 M3 21 L4.5 22.3 L7 20 M3 25 L4.5 26.3 L7 24" fill="none" stroke="#fff" stroke-width="0.8"/><circle cx="24.5" cy="29" r="6" fill="#1796cf" stroke="#f4f4f4" stroke-width="1"/><path d="M22 29 L24 31 L27.5 27" fill="none" stroke="#fff" stroke-width="1.4"/></svg>
<!--/ICONS-->

<!--CONTENT-->
<div class="abs" style="left:0;top:1173.5px;width:1631px;text-align:center;font-size:14.7px;color:#111">Copyright © 2024 - Magnum Logistics S.A. All Rights Reserved.</div>
</body></html>
